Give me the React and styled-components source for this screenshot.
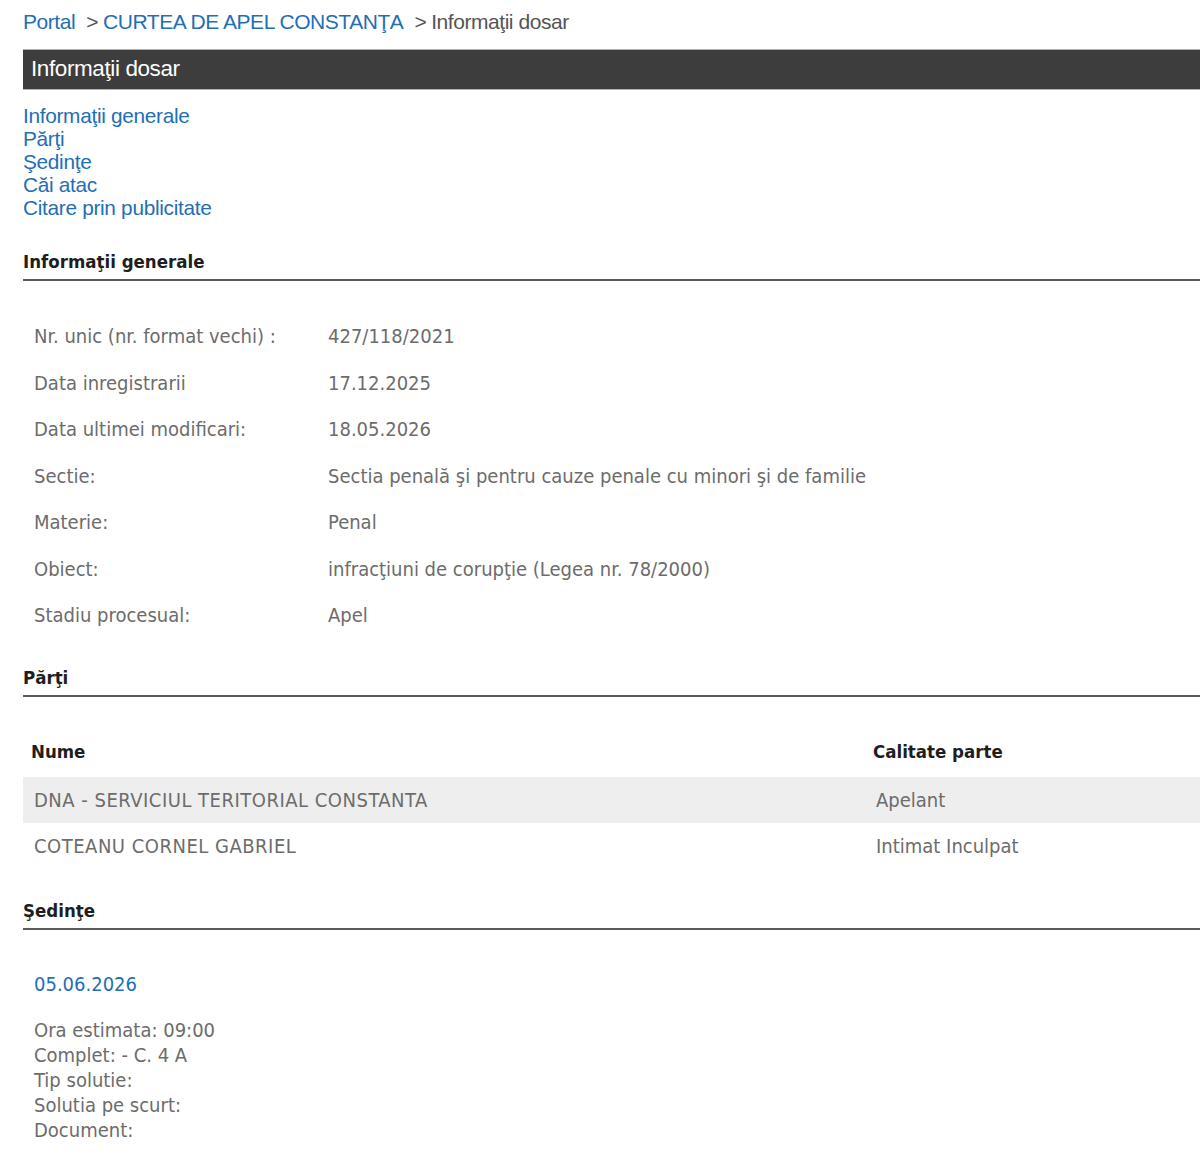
import React from "react";
import styled, { createGlobalStyle } from "styled-components";

const Global = createGlobalStyle`
  html, body { margin: 0; padding: 0; background: #fff; }
  body { font-family: "Liberation Sans", Arial, sans-serif; overflow-x: hidden; }
  * { box-sizing: border-box; }
`;

const Page = styled.div`
  width: 1200px;
  padding: 10px 0 20px 23px;
`;

const Crumbs = styled.div`
  display: flex;
  align-items: baseline;
  font-family: "Liberation Sans", Arial, sans-serif;
  font-size: 21px;
  letter-spacing: -0.45px;
  color: #555;
  height: 24px;
  line-height: 24px;
`;

const Link = styled.a`
  color: #1f6eb6;
  text-decoration: none;
`;

const Sep = styled.span`
  color: #555;
  margin: 0 5px 0 11px;
`;

const TitleBar = styled.div`
  margin-top: 15px;
  height: 41px;
  background: #3d3d3d;
  border-top: 1px solid #b0b0b0;
  border-bottom: 1px solid #b0b0b0;
  color: #fff;
  font-family: "Liberation Sans", Arial, sans-serif;
  font-size: 22.5px;
  letter-spacing: -0.4px;
  line-height: 37px;
  padding-left: 8px;
`;

const Nav = styled.nav`
  display: flex;
  flex-direction: column;
  margin-top: 14px;
  font-size: 20.8px;
  letter-spacing: -0.3px;
  line-height: 23px;
`;

const Section = styled.section`
  margin-top: ${(p) => p.$top}px;
`;

const SectionTitle = styled.h2`
  margin: 0;
  font-family: "DejaVu Sans Condensed", "DejaVu Sans", sans-serif;
  font-weight: bold;
  font-size: 18.5px;
  color: #1e1e1e;
  line-height: 24px;
  padding-bottom: 5px;
  border-bottom: 2px solid #5a5a5a;
`;

const Body = styled.div`
  font-family: "DejaVu Sans Condensed", "DejaVu Sans", sans-serif;
  font-size: 20px;
  color: #6c6c6c;
`;

const InfoGrid = styled(Body)`
  display: grid;
  grid-template-columns: 294px 1fr;
  padding: 32px 0 0 11px;
`;

const InfoCell = styled.div`
  height: 46.5px;
  line-height: 46.5px;
  white-space: nowrap;
`;

const PartyTable = styled(Body)`
  margin-top: 30px;
`;

const PartyRow = styled.div`
  display: grid;
  grid-template-columns: 842px 1fr;
  height: ${(p) => (p.$head ? 50 : 46)}px;
  align-items: center;
  background: ${(p) => (p.$shade ? "#eeeeee" : "transparent")};
  padding-left: ${(p) => (p.$head ? 8 : 11)}px;
  color: ${(p) => (p.$head ? "#1e1e1e" : "#6c6c6c")};
  font-weight: ${(p) => (p.$head ? "bold" : "normal")};
  font-size: ${(p) => (p.$head ? 18.5 : 20)}px;
`;

const NameCell = styled.span`
  letter-spacing: ${(p) => (p.$caps ? "0.5px" : "0")};
`;

const SessionBlock = styled(Body)`
  padding: 42px 0 0 11px;
`;

const SessionDate = styled.div`
  color: #1f6eb6;
  font-size: 20px;
  line-height: 24px;
  margin-bottom: 22px;
`;

const SessionLine = styled.div`
  line-height: 25px;
`;

const info = [
  ["Nr. unic (nr. format vechi) :", "427/118/2021"],
  ["Data inregistrarii", "17.12.2025"],
  ["Data ultimei modificari:", "18.05.2026"],
  ["Sectie:", "Sectia penală şi pentru cauze penale cu minori şi de familie"],
  ["Materie:", "Penal"],
  ["Obiect:", "infracţiuni de corupţie (Legea nr. 78/2000)"],
  ["Stadiu procesual:", "Apel"],
];

const parties = [
  ["DNA - SERVICIUL TERITORIAL CONSTANTA", "Apelant"],
  ["COTEANU CORNEL GABRIEL", "Intimat Inculpat"],
];

export default function App() {
  return (
    <>
      <Global />
      <Page>
        <Crumbs>
          <Link href="#">Portal</Link>
          <Sep>&gt;</Sep>
          <Link href="#">CURTEA DE APEL CONSTANŢA</Link>
          <Sep>&gt;</Sep>
          <span>Informaţii dosar</span>
        </Crumbs>
        <TitleBar>Informaţii dosar</TitleBar>
        <Nav>
          <Link href="#">Informaţii generale</Link>
          <Link href="#">Părţi</Link>
          <Link href="#">Şedinţe</Link>
          <Link href="#">Căi atac</Link>
          <Link href="#">Citare prin publicitate</Link>
        </Nav>

        <Section $top={31}>
          <SectionTitle>Informaţii generale</SectionTitle>
          <InfoGrid>
            {info.map(([k, v]) => (
              <React.Fragment key={k}>
                <InfoCell>{k}</InfoCell>
                <InfoCell>{v}</InfoCell>
              </React.Fragment>
            ))}
          </InfoGrid>
        </Section>

        <Section $top={27}>
          <SectionTitle>Părţi</SectionTitle>
          <PartyTable>
            <PartyRow $head>
              <span>Nume</span>
              <span>Calitate parte</span>
            </PartyRow>
            {parties.map(([n, c], i) => (
              <PartyRow key={n} $shade={i % 2 === 0}>
                <NameCell $caps>{n}</NameCell>
                <NameCell>{c}</NameCell>
              </PartyRow>
            ))}
          </PartyTable>
        </Section>

        <Section $top={30}>
          <SectionTitle>Şedinţe</SectionTitle>
          <SessionBlock>
            <SessionDate>05.06.2026</SessionDate>
            <SessionLine>Ora estimata: 09:00</SessionLine>
            <SessionLine>Complet: - C. 4 A</SessionLine>
            <SessionLine>Tip solutie:</SessionLine>
            <SessionLine>Solutia pe scurt:</SessionLine>
            <SessionLine>Document:</SessionLine>
          </SessionBlock>
        </Section>
      </Page>
    </>
  );
}
